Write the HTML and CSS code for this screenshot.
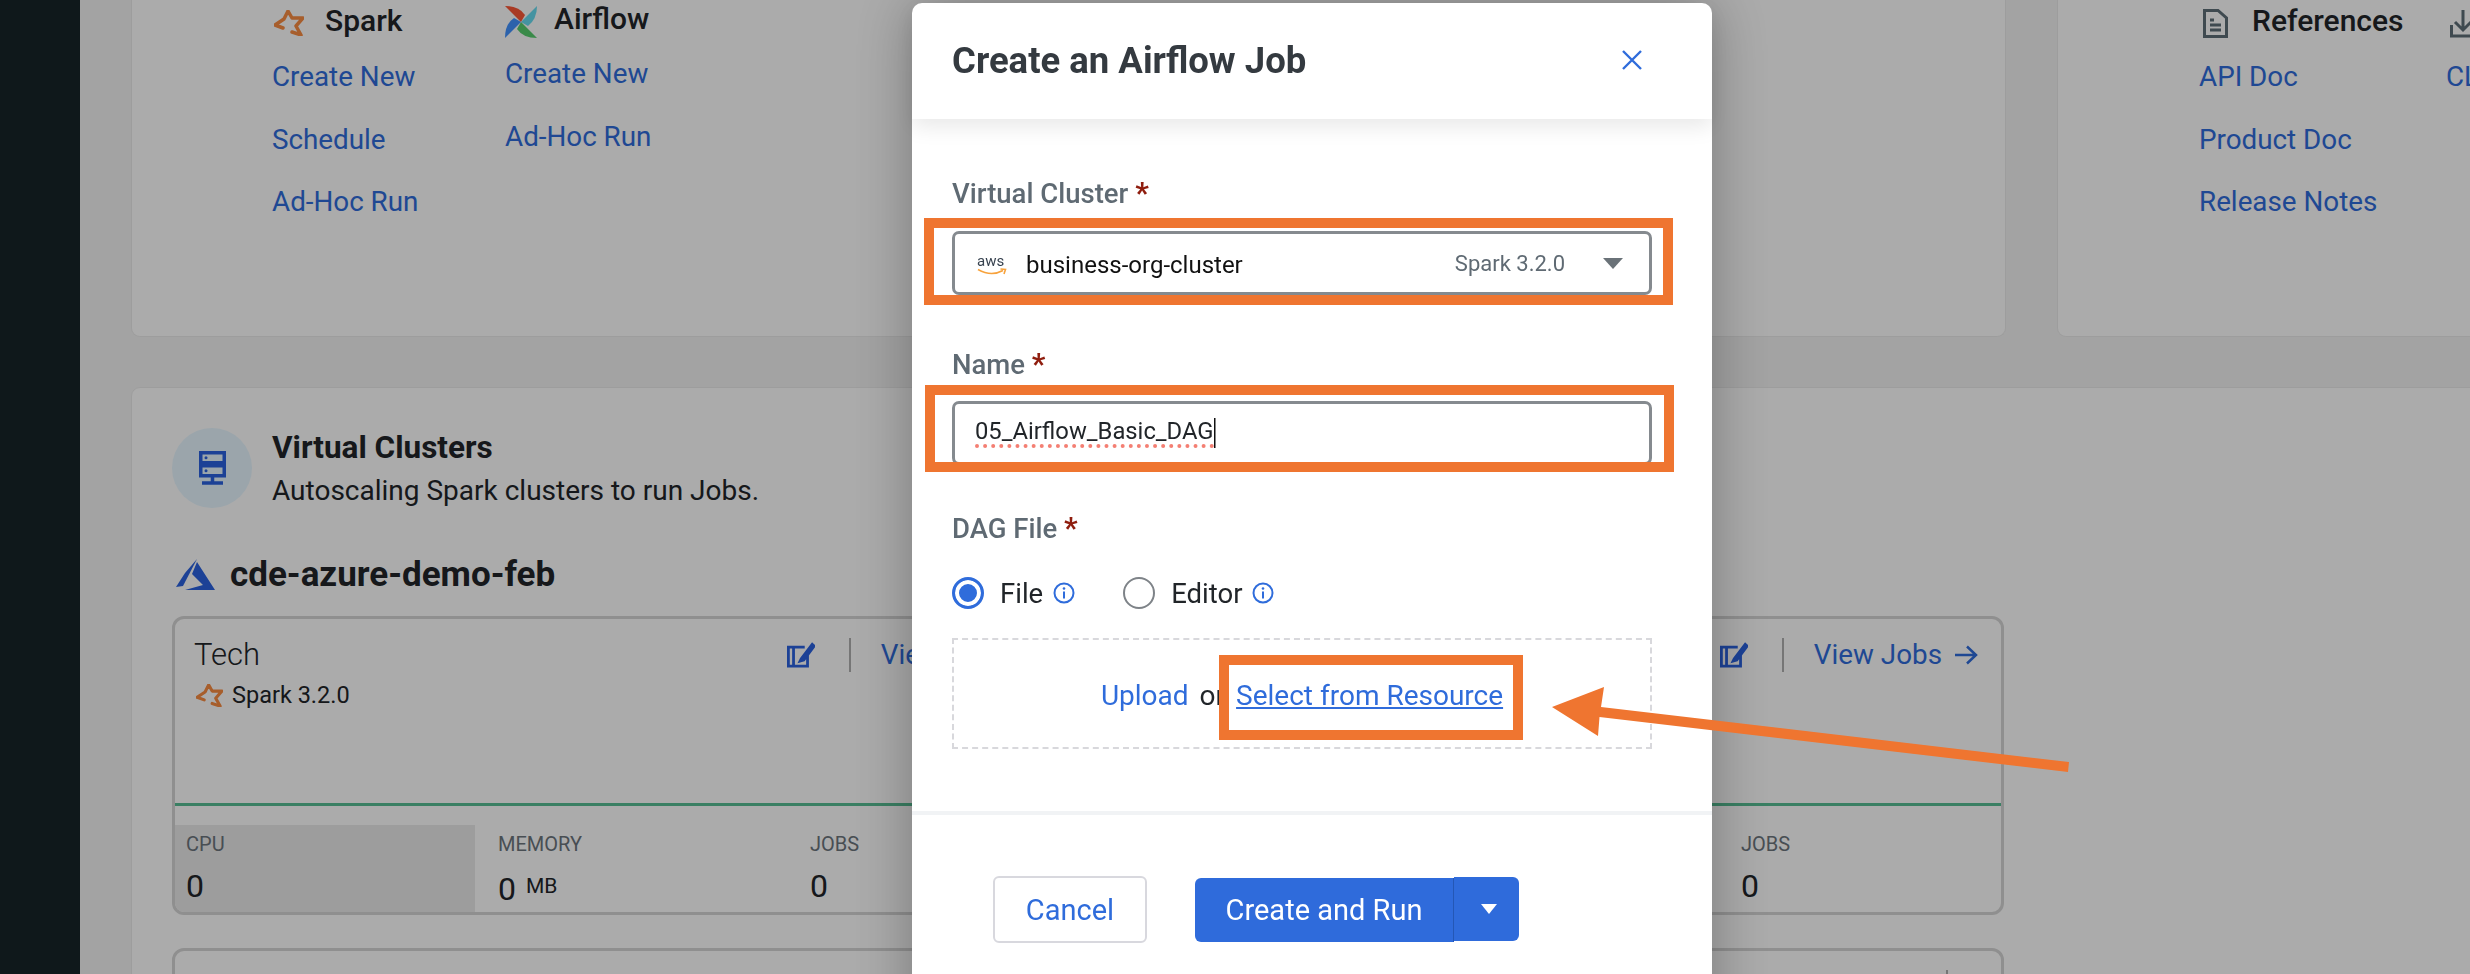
FILE: index.html
```html
<!DOCTYPE html>
<html lang="en">
<head>
<meta charset="UTF-8" />
<title>Create an Airflow Job</title>
<link rel="stylesheet" href="styles.css">
</head>
<body>
  <div class="page">
    <aside class="sidebar"></aside>
    <main class="main">
      <div class="top-row">
        <section class="card quick-card">
          <div class="quick-col spark-col">
            <h3 class="quick-head">
              <svg class="icon-spark" viewBox="0 0 30 26"><path d="M9 18L1 15L10 9L14 1L18 8L29 8L22 16L27 25L18 22" fill="none" stroke="#f98c42" stroke-width="3.5" stroke-linejoin="round" stroke-linecap="round"/></svg>
              <span class="head-text">Spark</span>
            </h3>
            <a class="link">Create New</a>
            <a class="link">Schedule</a>
            <a class="link">Ad-Hoc Run</a>
          </div>
          <div class="quick-col">
            <h3 class="quick-head">
              <svg class="icon-airflow" viewBox="0 0 32 32">
                <path d="M16 16L0 0Q14 0 20 9Z" fill="#fc5736"/>
                <path d="M16 16L32 0Q32 13 23 20Z" fill="#68dcf0"/>
                <path d="M16 16L32 32Q18 32 12 23Z" fill="#57ce6e"/>
                <path d="M16 16L0 32Q0 18 9 12Z" fill="#4292ff"/>
              </svg>
              <span class="head-text">Airflow</span>
            </h3>
            <a class="link">Create New</a>
            <a class="link">Ad-Hoc Run</a>
          </div>
        </section>
        <section class="card refs-card">
          <div class="refs-col">
            <h3 class="quick-head">
              <svg class="icon-doc" viewBox="0 0 25 29"><path d="M1.5 1.5H15L23.5 9V27.5H1.5Z M7 11H11 M7 16H18 M7 21H18" fill="none" stroke="#5f6f78" stroke-width="3"/></svg>
              <span class="head-text">References</span>
            </h3>
            <a class="link">API Doc</a>
            <a class="link">Product Doc</a>
            <a class="link">Release Notes</a>
          </div>
          <div class="refs-col">
            <h3 class="quick-head">
              <svg class="icon-doc" viewBox="0 0 25 29"><path d="M13 1V20M5 13L13 21L21 13M1.5 16V27H25" fill="none" stroke="#5f6f78" stroke-width="3"/></svg>
            </h3>
            <a class="link">CLI Tool</a>
          </div>
        </section>
      </div>

      <section class="card clusters-card">
        <div class="clusters-head">
          <div class="clusters-badge">
            <svg class="icon-server" viewBox="0 0 27 34">
              <path d="M1.75 1.75H25.25V11.75H1.75ZM1.75 14.75H25.25V24.75H1.75ZM13.5 25V32M3 32H24" fill="none" stroke="#2a62e0" stroke-width="3.5"/>
              <circle cx="7" cy="6.75" r="1.5" fill="#2a62e0"/><circle cx="7" cy="19.75" r="1.5" fill="#2a62e0"/>
            </svg>
          </div>
          <div>
            <h2 class="clusters-title">Virtual Clusters</h2>
            <p class="clusters-sub">Autoscaling Spark clusters to run Jobs.</p>
          </div>
        </div>

        <h2 class="region-title">
          <svg class="icon-azure" viewBox="0 0 40 32">
            <path d="M0 29L9 15L21 1L7 28Z" fill="#2a62e0"/>
            <path d="M21 4L39 32H9L27 27L16 16Z" fill="#2a62e0"/>
          </svg>
          cde-azure-demo-feb
        </h2>

        <div class="cluster">
          <div class="cluster-top">
            <div class="cluster-info">
              <div class="cluster-name">Tech</div>
              <div class="cluster-version">
                <svg class="icon-spark-small" viewBox="0 0 30 26"><path d="M9 18L1 15L10 9L14 1L18 8L29 8L22 16L27 25L18 22" fill="none" stroke="#f98c42" stroke-width="3.5" stroke-linejoin="round" stroke-linecap="round"/></svg>
                Spark 3.2.0
              </div>
            </div>
            <div class="cluster-actions">
              <div class="action-group">
                <svg class="icon-edit" viewBox="0 0 30 27"><path d="M19 5H1.5V25.5H22V12M7 5V25M15 18L27 2L29 4L18 19L14 20Z" fill="none" stroke="#2a62e0" stroke-width="3"/></svg>
                <span class="action-sep"></span>
                <a class="link view-link">View Jobs <svg class="icon-arrow" viewBox="0 0 24 20"><path d="M1 10H22M13 1.5L22 10L13 18.5" fill="none" stroke="#2f6cdb" stroke-width="2.5"/></svg></a>
              </div>
              <div class="action-group">
                <svg class="icon-edit" viewBox="0 0 30 27"><path d="M19 5H1.5V25.5H22V12M7 5V25M15 18L27 2L29 4L18 19L14 20Z" fill="none" stroke="#2a62e0" stroke-width="3"/></svg>
                <span class="action-sep"></span>
                <a class="link view-link">View Jobs <svg class="icon-arrow" viewBox="0 0 24 20"><path d="M1 10H22M13 1.5L22 10L13 18.5" fill="none" stroke="#2f6cdb" stroke-width="2.5"/></svg></a>
              </div>
            </div>
          </div>
          <div class="cluster-stats">
            <div class="stat stat-active"><div class="stat-label">CPU</div><div class="stat-value">0</div></div>
            <div class="stat"><div class="stat-label">MEMORY</div><div class="stat-value">0 <small>MB</small></div></div>
            <div class="stat"><div class="stat-label">JOBS</div><div class="stat-value">0</div></div>
            <div class="stat stat-last"><div class="stat-label">JOBS</div><div class="stat-value">0</div></div>
          </div>
        </div>

        <div class="cluster next-cluster">
          <div class="cluster-top">
            <div class="cluster-info"></div>
            <div class="cluster-actions">
              <div class="action-group"><span class="edit-gap"></span><span class="action-sep"></span></div>
            </div>
          </div>
        </div>
      </section>
    </main>
  </div>

  <div class="backdrop"></div>

  <div class="modal">
    <header class="modal-head">
      <h1 class="modal-title">Create an Airflow Job</h1>
      <svg class="icon-close" viewBox="0 0 20 20"><path d="M1 1L19 19M19 1L1 19" fill="none" stroke="#2f6cdb" stroke-width="2.4"/></svg>
    </header>

    <div class="modal-body">
      <label class="field-label">Virtual Cluster <span class="req">*</span></label>
      <div class="field field-select">
        <span class="aws">aws<svg viewBox="0 0 30 9"><path d="M1 1.5Q14 9 26 2.5M23.5 1L28.5 1.5L27 6" fill="none" stroke="#f7a23c" stroke-width="1.6"/></svg></span>
        <span class="select-value">business-org-cluster</span>
        <span class="select-version">Spark 3.2.0</span>
        <span class="select-caret"></span>
      </div>

      <label class="field-label label-name">Name <span class="req">*</span></label>
      <div class="field field-input"><span class="typed">05_Airflow_Basic_DAG</span></div>

      <label class="field-label label-dag">DAG File <span class="req">*</span></label>
      <div class="radios">
        <span class="radio radio-on"></span><span class="radio-text">File</span>
        <svg class="icon-info" viewBox="0 0 22 22"><circle cx="11" cy="11" r="9.5" fill="none" stroke="#2f6cdb" stroke-width="2"/><path d="M11 9.5V16.5" stroke="#2f6cdb" stroke-width="2"/><circle cx="11" cy="6.5" r="1.3" fill="#2f6cdb"/></svg>
        <span class="radio radio-off"></span><span class="radio-text">Editor</span>
        <svg class="icon-info" viewBox="0 0 22 22"><circle cx="11" cy="11" r="9.5" fill="none" stroke="#2f6cdb" stroke-width="2"/><path d="M11 9.5V16.5" stroke="#2f6cdb" stroke-width="2"/><circle cx="11" cy="6.5" r="1.3" fill="#2f6cdb"/></svg>
      </div>

      <div class="dropzone">
        <a class="drop-link">Upload</a>
        <span class="drop-or">or</span>
        <a class="drop-link drop-select">Select from Resource</a>
      </div>
    </div>

    <footer class="modal-foot">
      <button class="btn btn-cancel">Cancel</button>
      <button class="btn btn-primary">Create and Run</button>
      <button class="btn btn-split"><span class="split-caret"></span></button>
    </footer>
  </div>

  <!-- orange annotations drawn on top of the screenshot -->
  <div class="mark mark-cluster"></div>
  <div class="mark mark-name"></div>
  <div class="mark mark-resource"></div>
  <svg class="mark-arrow" viewBox="0 0 2470 974"><polygon points="1552,707 1604,687 1601,707 2069,762 2068,772 1599.5,717 1598,736" fill="#ef7530"/></svg>
</body>
</html>
```

FILE: styles.css
```css
* { box-sizing: border-box; }
html, body {
  margin: 0;
  height: 100%;
  overflow: hidden;
}
body {
  font-family: Roboto, 'Liberation Sans', sans-serif;
  font-size: 28px;
  color: #212529;
  background: #f3f3f3;
}
h1, h2, h3, p { margin: 0; }

.page { display: flex; height: 974px; overflow: hidden; }
.sidebar { flex: 0 0 80px; background: #172429; }
.main { flex: 1; min-width: 0; padding-left: 51px; }

.card {
  background: #fff;
  border: 1.5px solid #ebebeb;
  border-radius: 9px;
}
.top-row { display: flex; gap: 51px; height: 337px; margin-bottom: 50px; }
.quick-card {
  flex: 0 0 1875px;
  display: flex;
  padding-left: 140px;
  border-top: 0;
  border-radius: 0 0 9px 9px;
}
.refs-card {
  flex: 0 0 600px;
  display: flex;
  padding-left: 141px;
  border-top: 0;
  border-radius: 0 0 9px 9px;
}
.quick-col { width: 233px; display: flex; flex-direction: column; }
.refs-col { width: 247px; display: flex; flex-direction: column; }

.quick-head {
  display: flex;
  align-items: center;
  flex: none;
  height: 46px;
  font-size: 30px;
  font-weight: 500;
  color: #212529;
  white-space: nowrap;
}
.quick-col:not(.spark-col) .quick-head { height: 43px; }
.head-text { margin-bottom: 6px; }
.link { color: #2f6cdb; font-size: 27.8px; height: 62.5px; line-height: 62.5px; white-space: nowrap; }

.icon-spark { width: 30px; height: 26px; margin: 0 21px 0 2px; }
.icon-airflow { width: 32px; height: 32px; margin-right: 17px; }
.icon-doc { width: 25px; height: 29px; margin: 0 24px 0 4px; flex: none; }

.clusters-card { height: 700px; padding: 40px 0 0 40px; width: 2400px; }
.clusters-head { display: flex; gap: 20px; }
.clusters-badge {
  width: 80px;
  height: 80px;
  border-radius: 50%;
  background: #e7f7ff;
  display: flex;
  align-items: center;
  justify-content: center;
}
.icon-server { width: 27px; height: 34px; }
.clusters-title { font-size: 31.5px; font-weight: 700; line-height: 40px; color: #212529; }
.clusters-sub { line-height: 40px; margin-top: 3px; }

.region-title {
  display: flex;
  align-items: center;
  height: 44px;
  margin-top: 41px;
  font-size: 35px;
  font-weight: 700;
}
.icon-azure { width: 40px; height: 32px; margin: 0 14px 0 4px; }

.cluster {
  width: 1832px;
  height: 299px;
  margin-top: 20px;
  border: 3px solid #d6d6d6;
  border-radius: 12px;
  overflow: hidden;
}
.next-cluster { margin-top: 33px; }
.cluster-top {
  height: 187px;
  display: flex;
  justify-content: space-between;
  padding: 16px 23px 0 19px;
  border-bottom: 3px solid #57be94;
}
.cluster-name { font-size: 31px; font-weight: 300; line-height: 40px; }
.cluster-version { display: flex; align-items: center; height: 30px; margin-top: 5px; font-size: 23.5px; gap: 9px; }
.icon-spark-small { width: 27px; height: 23px; margin-left: 2px; }

.cluster-actions { display: flex; gap: 675px; }
.action-group { display: flex; align-items: center; height: 40px; }
.icon-edit { width: 28px; height: 26px; }
.edit-gap { width: 28px; }
.action-sep { width: 2px; height: 34px; background: #b0b0b0; margin: 0 30px 0 34px; }
.view-link { display: flex; align-items: center; gap: 12px; height: 40px; line-height: 40px; }
.icon-arrow { width: 24px; height: 20px; }

.cluster-stats { display: flex; gap: 12px; padding-top: 19px; height: 106px; }
.stat { width: 300px; padding: 7px 0 0 11px; }
.stat-active { background: #eaeaea; }
.stat-last { margin-left: auto; width: 271px; }
.stat-label { font-size: 20px; line-height: 24px; color: #6c757d; }
.stat-value { font-size: 32px; line-height: 40px; margin-top: 10px; color: #212529; }
.stat-value small { font-size: 21px; vertical-align: 7px; margin-left: 2px; }

.backdrop { position: fixed; inset: 0; background: rgba(0, 0, 0, 0.33); }

.modal {
  position: fixed;
  left: 912px;
  top: 3px;
  width: 800px;
  height: 1100px;
  background: #fff;
  border-radius: 10px 10px 0 0;
  box-shadow: 0 0 60px rgba(0, 0, 0, 0.3);
}
.modal-head {
  height: 116px;
  display: flex;
  align-items: center;
  justify-content: space-between;
  padding: 0 70px 2px 40px;
  box-shadow: 0 8px 20px rgba(0, 0, 0, 0.09);
}
.modal-title { font-size: 36.5px; font-weight: 700; color: #343a40; }
.icon-close { width: 20px; height: 20px; }

.modal-body { padding: 59px 60px 0 40px; height: 692px; }
.field-label { display: block; height: 30px; line-height: 30px; font-size: 27.5px; font-weight: 500; color: #5f6a73; }
.req { color: #8f1d0e; font-weight: 700; font-size: 30px; }
.label-name { margin-top: 54px; }
.label-dag { margin-top: 48px; }

.field {
  height: 64px;
  margin-top: 23px;
  border: 3px solid #858a8f;
  border-radius: 7px;
  display: flex;
  align-items: center;
  padding-left: 21px;
}
.aws {
  width: 50px;
  flex: none;
  display: flex;
  flex-direction: column;
  font-size: 15px;
  line-height: 13px;
  padding: 6px 0 0 1px;
  color: #37424f;
}
.aws svg { width: 30px; height: 9px; }
.select-value { flex: 1; color: #111; font-size: 24px; padding-top: 3px; }
.select-version { font-size: 22px; color: #5f6a73; }
.select-caret {
  width: 0;
  height: 0;
  margin: 0 26px 0 38px;
  border-left: 10px solid transparent;
  border-right: 10px solid transparent;
  border-top: 11px solid #6a7278;
}
.field-input { margin-top: 22px; align-items: flex-start; padding: 14px 0 0 20px; }
.typed {
  font-size: 23.8px;
  line-height: 26px;
  color: #212529;
  border-bottom: 4px dotted #f47f73;
  box-shadow: 1.5px 0 0 #111;
}

.radios { display: flex; align-items: center; height: 32px; margin-top: 34px; }
.radio { width: 32px; height: 32px; border-radius: 50%; background: #fff; flex: none; }
.radio-on { border: 3px solid #2f6cdb; box-shadow: inset 0 0 0 4px #fff; background: #2f6cdb; }
.radio-off { border: 2.5px solid #7e8388; margin-left: 48px; }
.radio-text { margin: 0 10px 0 16px; font-size: 27.5px; color: #212529; }
.icon-info { width: 22px; height: 22px; }

.dropzone {
  height: 111px;
  margin-top: 29px;
  border: 2.5px dashed #d8d8dc;
  display: flex;
  align-items: center;
  justify-content: center;
  padding-top: 3px;
}
.drop-link { color: #2f6cdb; }
.drop-or { margin: 0 11px; color: #212529; }
.drop-select { text-decoration: underline; }

.modal-foot {
  border-top: 4px solid #f1f3f5;
  display: flex;
  align-items: flex-start;
  padding: 61px 0 0 81px;
}
.btn {
  font-family: inherit;
  font-size: 29px;
  border-radius: 6px;
  padding: 0;
}
.btn-cancel {
  width: 154px;
  height: 67px;
  margin-right: 48px;
  background: #fff;
  color: #2f6cdb;
  border: 2.5px solid #d8d8de;
}
.btn-primary {
  width: 259px;
  height: 64px;
  margin-top: 2px;
  background: #2f6bdb;
  color: #fff;
  border: 0;
  border-right: 1px solid #2457b5;
  border-radius: 6px 0 0 6px;
}
.btn-split {
  width: 65px;
  height: 64px;
  margin-top: 1px;
  background: #2f6bdb;
  border: 0;
  border-radius: 0 6px 6px 0;
  display: flex;
  align-items: center;
  justify-content: center;
}
.split-caret {
  width: 0;
  height: 0;
  margin-left: 4px;
  border-left: 8px solid transparent;
  border-right: 8px solid transparent;
  border-top: 10px solid #fff;
}

.mark { position: fixed; border: 10px solid #ef7530; }
.mark-cluster { left: 924px; top: 218px; width: 749px; height: 87px; }
.mark-name { left: 925px; top: 385px; width: 749px; height: 87px; }
.mark-resource { left: 1219px; top: 655px; width: 304px; height: 85px; }
.mark-arrow { position: fixed; left: 0; top: 0; width: 2470px; height: 974px; }
```
